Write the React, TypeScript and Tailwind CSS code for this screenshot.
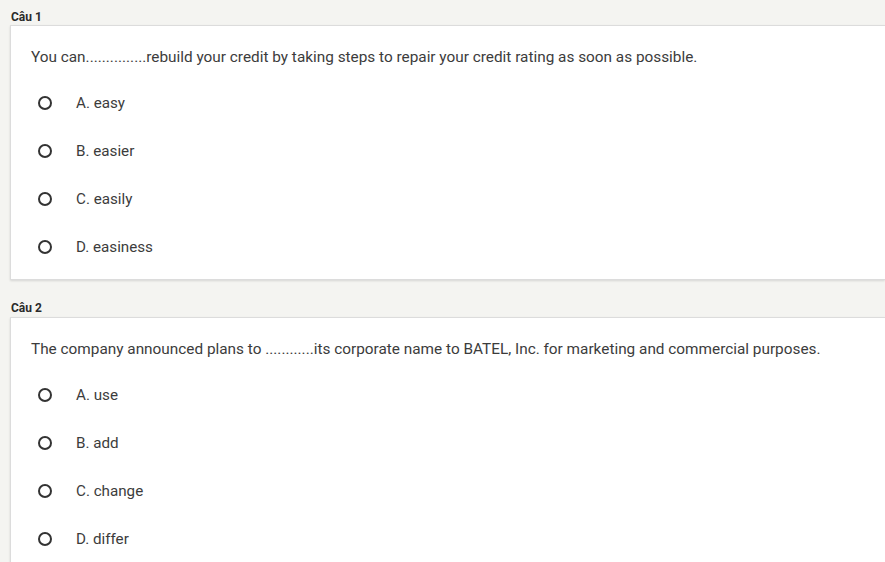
import React from 'react';

type Question = { label: string; text: string; options: string[] };

const questions: Question[] = [
  {
    label: 'Câu 1',
    text: 'You can...............rebuild your credit by taking steps to repair your credit rating as soon as possible.',
    options: ['A. easy', 'B. easier', 'C. easily', 'D. easiness'],
  },
  {
    label: 'Câu 2',
    text: 'The company announced plans to ............its corporate name to BATEL, Inc. for marketing and commercial purposes.',
    options: ['A. use', 'B. add', 'C. change', 'D. differ'],
  },
];

const QuestionCard: React.FC<{ q: Question; first: boolean }> = ({ q, first }) => (
  <div className={first ? '' : 'mt-[11px]'}>
    <div className="pt-[10px] pl-[11px] text-[12px] leading-[15px] font-bold text-[#2a2a2a]">{q.label}</div>
    <div className={`ml-[10px] bg-white border border-[#dcdcdc] border-r-0 shadow-[0_1px_2px_rgba(0,0,0,0.12)] ${first ? '' : 'mt-[1px]'}`}>
      <div className="pt-[21px] pl-5 text-[15.35px] leading-5 text-[#3c3c3c] whitespace-nowrap">{q.text}</div>
      <div className="mt-[12px] pb-[8px]">
        {q.options.map((o) => (
          <label key={o} className="flex items-center h-12 cursor-pointer">
            <span className="ml-[27px] w-[14px] h-[14px] rounded-full border-2 border-[#333] shrink-0" />
            <span className="ml-[24px] text-[15.2px] text-[#3c3c3c]">{o}</span>
          </label>
        ))}
      </div>
    </div>
  </div>
);

export default function App() {
  return (
    <div className="min-h-screen w-[885px] h-[562px] overflow-hidden bg-[#f4f4f1]" style={{ fontFamily: 'Roboto, "Noto Sans", sans-serif' }}>
      {questions.map((q, i) => (
        <QuestionCard key={q.label} q={q} first={i === 0} />
      ))}
    </div>
  );
}
